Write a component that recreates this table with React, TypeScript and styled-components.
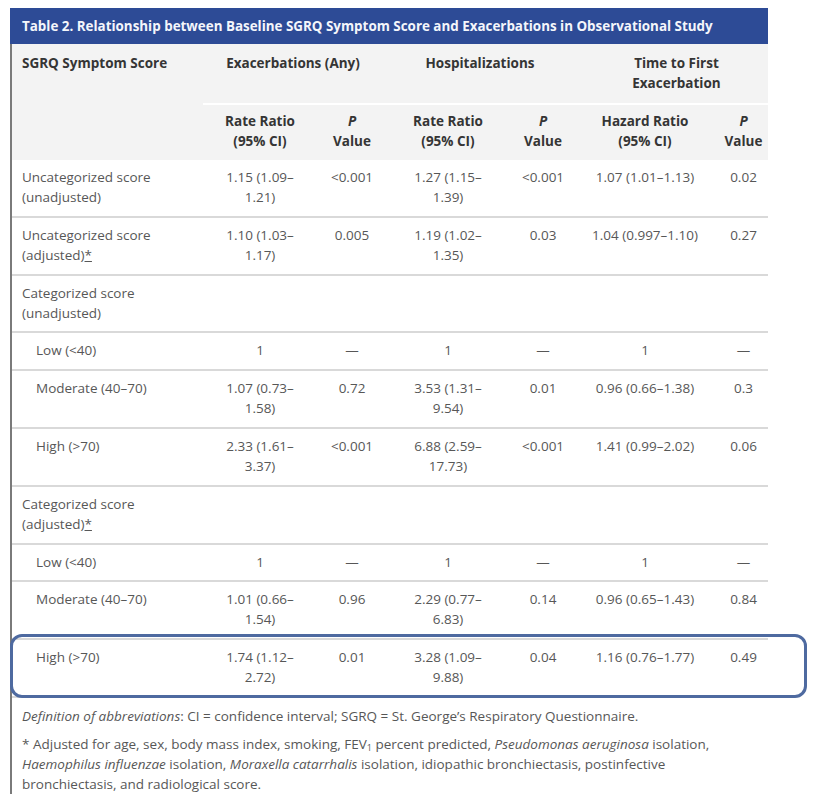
import React from 'react';
import styled, { createGlobalStyle } from 'styled-components';

const COLS = '191px 114px 70px 122px 68px 136px 55px';

const Global = createGlobalStyle`
  html, body { margin: 0; padding: 0; background: #ffffff; }
  body { font-family: "Open Sans", "Liberation Sans", sans-serif; }
`;

const Page = styled.div`
  padding: 8px 0 0 10px;
  width: 758px;
`;

const TitleBar = styled.div`
  background: #2d4b96;
  color: #f4f6fb;
  font: 700 13.4px/20px "Open Sans", "Liberation Sans", sans-serif;
  padding: 8px 12px;
  white-space: nowrap;
`;

const Frame = styled.div`
  border-left: 2px solid #7a7a7a;
`;

const HeadGrid = styled.div`
  display: grid;
  grid-template-columns: ${COLS};
  grid-template-rows: auto auto;
  background: #f3f3f3;
  color: #353535;
  font-size: 13.5px;
  line-height: 20px;
  font-weight: 700;
`;

const HeadCell = styled.div<{ $span?: number; $rows?: number; $left?: boolean; $divider?: boolean; $shift?: number }>`
  grid-column: span ${(p) => p.$span ?? 1};
  grid-row: span ${(p) => p.$rows ?? 1};
  text-align: ${(p) => (p.$left ? 'left' : 'center')};
  padding: ${(p) => (p.$divider || p.$left ? '9px 8px 10px' : '6px 4px 9px')};
  padding-left: ${(p) => (p.$left ? '10px' : `${4 + (p.$shift ?? 0)}px`)};
  border-bottom: ${(p) => (p.$divider ? '2px solid #ffffff' : '0')};
  white-space: pre-line;
`;

const Ital = styled.i`
  font-style: italic;
`;

const Row = styled.div<{ $highlight?: boolean }>`
  position: relative;
  display: grid;
  grid-template-columns: ${COLS};
  border-bottom: 2px solid #d9d9d9;
  color: #575757;
  font-size: 13.5px;
  line-height: 20px;
  &::after {
    content: '';
    display: ${(p) => (p.$highlight ? 'block' : 'none')};
    position: absolute;
    top: -6px;
    bottom: -2px;
    left: -2px;
    right: -39px;
    border: 3px solid #4e6aa0;
    border-radius: 12px;
    pointer-events: none;
  }
`;

const LabelCell = styled.div<{ $indent?: boolean }>`
  padding: 7px 8px 8.8px ${(p) => (p.$indent ? '24px' : '10px')};
`;

const LabelLine = styled.span`
  display: block;
`;

const ValueCell = styled.div<{ $shift?: number }>`
  padding: 7px 4px 8.8px ${(p) => 4 + (p.$shift ?? 0)}px;
  text-align: center;
  white-space: pre-line;
`;

const Star = styled.span`
  text-decoration: underline;
`;

const Foot = styled.p<{ $gap?: number }>`
  margin: ${(p) => p.$gap ?? 9}px 0 0;
  padding: 0 12px 0 10px;
  color: #575757;
  font-size: 13.5px;
  line-height: 20px;
`;

const Sub = styled.sub`
  font-size: 9px;
  line-height: 0;
  vertical-align: -2px;
`;

type RowData = {
  label: string[];
  star?: boolean;
  indent?: boolean;
  highlight?: boolean;
  v: string[];
};

const empty = ['', '', '', '', '', ''];

const rows: RowData[] = [
  { label: ['Uncategorized score', '(unadjusted)'], v: ['1.15 (1.09–\n1.21)', '<0.001', '1.27 (1.15–\n1.39)', '<0.001', '1.07 (1.01–1.13)', '0.02'] },
  { label: ['Uncategorized score', '(adjusted)'], star: true, v: ['1.10 (1.03–\n1.17)', '0.005', '1.19 (1.02–\n1.35)', '0.03', '1.04 (0.997–1.10)', '0.27'] },
  { label: ['Categorized score', '(unadjusted)'], v: empty },
  { label: ['Low (<40)'], indent: true, v: ['1', '—', '1', '—', '1', '—'] },
  { label: ['Moderate (40–70)'], indent: true, v: ['1.07 (0.73–\n1.58)', '0.72', '3.53 (1.31–\n9.54)', '0.01', '0.96 (0.66–1.38)', '0.3'] },
  { label: ['High (>70)'], indent: true, v: ['2.33 (1.61–\n3.37)', '<0.001', '6.88 (2.59–\n17.73)', '<0.001', '1.41 (0.99–2.02)', '0.06'] },
  { label: ['Categorized score', '(adjusted)'], star: true, v: empty },
  { label: ['Low (<40)'], indent: true, v: ['1', '—', '1', '—', '1', '—'] },
  { label: ['Moderate (40–70)'], indent: true, v: ['1.01 (0.66–\n1.54)', '0.96', '2.29 (0.77–\n6.83)', '0.14', '0.96 (0.65–1.43)', '0.84'] },
  { label: ['High (>70)'], indent: true, highlight: true, v: ['1.74 (1.12–\n2.72)', '0.01', '3.28 (1.09–\n9.88)', '0.04', '1.16 (0.76–1.77)', '0.49'] },
];

export default function App() {
  return (
    <>
      <Global />
      <Page>
        <TitleBar>
          Table 2. Relationship between Baseline SGRQ Symptom Score and Exacerbations in Observational Study
        </TitleBar>
        <Frame>
          <HeadGrid>
            <HeadCell $left $rows={2}>SGRQ Symptom Score</HeadCell>
            <HeadCell $span={2} $divider>Exacerbations (Any)</HeadCell>
            <HeadCell $span={2} $divider>Hospitalizations</HeadCell>
            <HeadCell $span={2} $divider $shift={12}>{'Time to First\nExacerbation'}</HeadCell>
            <HeadCell>{'Rate Ratio\n(95% CI)'}</HeadCell>
            <HeadCell>
              <Ital>P</Ital>
              {'\nValue'}
            </HeadCell>
            <HeadCell>{'Rate Ratio\n(95% CI)'}</HeadCell>
            <HeadCell>
              <Ital>P</Ital>
              {'\nValue'}
            </HeadCell>
            <HeadCell>{'Hazard Ratio\n(95% CI)'}</HeadCell>
            <HeadCell $shift={6}>
              <Ital>P</Ital>
              {'\nValue'}
            </HeadCell>
          </HeadGrid>
          {rows.map((r, i) => (
            <Row key={i} $highlight={r.highlight}>
              <LabelCell $indent={r.indent}>
                {r.label.map((line, k) => (
                  <LabelLine key={k}>
                    {line}
                    {r.star && k === r.label.length - 1 && <Star>*</Star>}
                  </LabelLine>
                ))}
              </LabelCell>
              {r.v.map((val, j) => (
                <ValueCell key={j} $shift={j === 5 ? 6 : 0}>
                  {val}
                </ValueCell>
              ))}
            </Row>
          ))}
          <Foot $gap={8}>
            <i>Definition of abbreviations</i>: CI = confidence interval; SGRQ = St. George’s Respiratory Questionnaire.
          </Foot>
          <Foot $gap={8}>
            * Adjusted for age, sex, body mass index, smoking, FEV<Sub>1</Sub> percent predicted, <i>Pseudomonas aeruginosa</i> isolation,
            <br />
            <i>Haemophilus influenzae</i> isolation, <i>Moraxella catarrhalis</i> isolation, idiopathic bronchiectasis, postinfective
            <br />
            bronchiectasis, and radiological score.
          </Foot>
        </Frame>
      </Page>
    </>
  );
}
